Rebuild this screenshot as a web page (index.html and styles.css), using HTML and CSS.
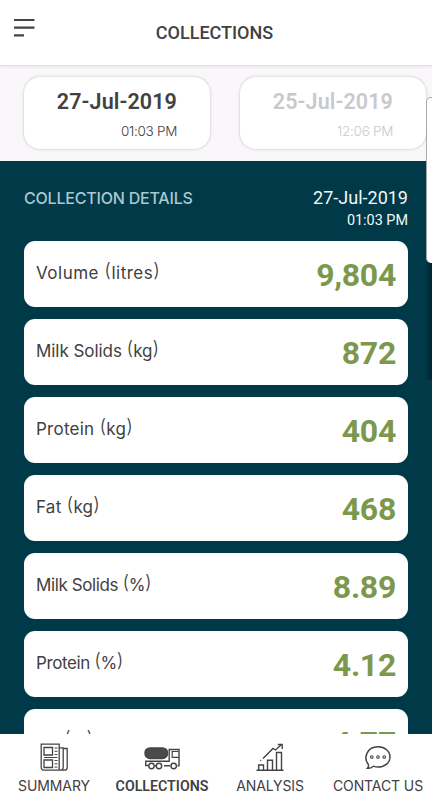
FILE: index.html
```html
<!DOCTYPE html>
<html lang="en">
<head>
<meta charset="utf-8">
<title>Collections</title>
<link rel="stylesheet" href="styles.css">
</head>
<body>
<div class="app">
  <header class="topbar">
    <svg class="menu" viewBox="0 0 22 20"><path d="M0 2h20.500M0 9.700h20.500M0 17.300h10" stroke="#444" stroke-width="2.200"/></svg>
    <h1 class="title">COLLECTIONS</h1>
  </header>
  <div class="dates">
    <div class="date-card"><div class="day">27-Jul-2019</div><div class="time">01:03 PM</div></div>
    <div class="date-card inactive"><div class="day">25-Jul-2019</div><div class="time">12:06 PM</div></div>
  </div>
  <main class="details">
    <div class="details-head">
      <h2 class="heading">COLLECTION DETAILS</h2>
      <div class="stamp"><div class="stamp-day">27-Jul-2019</div><div class="stamp-time">01:03 PM</div></div>
    </div>
    <div class="rows">
      <div class="row"><span class="label wide">Volume <span class="paren">(</span>litres<span class="paren">)</span></span><span class="value">9,804</span></div>
      <div class="row"><span class="label snug">Milk Solids <span class="paren">(</span>kg<span class="paren">)</span></span><span class="value">872</span></div>
      <div class="row"><span class="label medium">Protein <span class="paren">(</span>kg<span class="paren">)</span></span><span class="value">404</span></div>
      <div class="row"><span class="label medium">Fat <span class="paren">(</span>kg<span class="paren">)</span></span><span class="value">468</span></div>
      <div class="row"><span class="label tight">Milk Solids <span class="paren">(</span>%<span class="paren">)</span></span><span class="value">8.89</span></div>
      <div class="row"><span class="label tight">Protein <span class="paren">(</span>%<span class="paren">)</span></span><span class="value">4.12</span></div>
      <div class="row"><span class="label tight">Fat <span class="paren">(</span>%<span class="paren">)</span></span><span class="value">4.77</span></div>
    </div>
  </main>
  <nav class="tabs">
    <div class="tab summary">
      <svg class="icon" viewBox="0 0 36 32" fill="none" stroke="#444" stroke-width="1.300"><path d="M5.200 3.200h18v26H8.500q-3.300 0-3.300-3.300zM23.200 6.800h4v19.500q0 2.900-2.800 2.900M27.200 7.500h4v19q0 2.700-2.700 2.700h-5"/><path d="M8 6.500h8.500v7.500H8zM8 19h8.500v7.500H8z"/><path d="M18.500 7h3M18.500 10.300h3M18.500 13.600h3M18.500 19.500h3M18.500 22.800h3M18.500 26.100h3M8 16.500h13.500" stroke-width="1"/></svg>
      <span class="tab-name">SUMMARY</span>
    </div>
    <div class="tab collections">
      <svg class="icon" viewBox="0 0 36 32" fill="none" stroke="#444" stroke-width="1.400"><rect x="1" y="6.900" width="22.500" height="10.600" rx="5" fill="#4a4a4a"/><path d="M5 24.500H1.700v-4.300h23.500V8.500H35v16.300h-1.500M10.500 24.800h1.500M20 24.800h6.500"/><path d="M34.500 10.500h-6.300v5.800H35" stroke-width="1.200"/><g fill="#fff"><circle cx="7.500" cy="25" r="2.700"/><circle cx="15" cy="25" r="2.700"/><circle cx="29.700" cy="25" r="2.700"/></g></svg>
      <span class="tab-name">COLLECTIONS</span>
    </div>
    <div class="tab analysis">
      <svg class="icon" viewBox="0 0 36 32" fill="none" stroke="#444" stroke-width="1.400"><path d="M4.500 29.300h27M6.700 29v-5h4.800v5M15.500 29V19.200h5V29M24.500 29V11.500h5V29"/><path d="M11 17.500 21 7.500l2.500 1.500 6-5.500M25.800 3.500h4.400v4.400M8.300 19.700l.8-.6"/></svg>
      <span class="tab-name">ANALYSIS</span>
    </div>
    <div class="tab contact">
      <svg class="icon" viewBox="0 0 36 32" fill="none" stroke="#444" stroke-width="1.500"><path d="M8.200 23.200C3.500 17.500 6.300 5.800 18 5.800c7 0 12 4.500 12 10.200s-5 10.100-12 10.100c-2 0-3.200-.4-4.600-.8-1.700 1.500-3.700 2.200-6 2 1.200-1.300 1.500-2.600.8-4.100z"/><g stroke-width="1.100"><circle cx="11.800" cy="16" r="1.300"/><circle cx="18" cy="16" r="1.300"/><circle cx="24.200" cy="16" r="1.300"/></g></svg>
      <span class="tab-name">CONTACT US</span>
    </div>
  </nav>
  <div class="edge-shadow"></div>
  <div class="edge-panel"></div>
</div>
</body>
</html>
```
FILE: styles.css
```css
* { box-sizing: border-box; }
body { margin: 0; font-family: Roboto, sans-serif; color: #414042; }
h1, h2 { margin: 0; }
.app { position: relative; width: 432px; height: 800px; overflow: hidden; display: flex; flex-direction: column; background: #f9f7f9; }
.topbar { height: 66px; flex: none; background: #fff; border-bottom: 1px solid #e2e2e2; box-shadow: 0 1px 3px rgba(0,0,0,.08); display: grid; grid-template-columns: 60px 1fr 63px; }
.menu { width: 22px; height: 20px; margin: 18px 0 0 14px; }
.title { font-size: 18px; font-weight: 500; line-height: 22px; margin-top: 22px; text-align: center; }
.dates { height: 95px; flex: none; padding: 11px 0 0 24px; display: flex; gap: 30px; }
.date-card { width: 186px; height: 72px; flex: none; border-radius: 16px; background: #fff; box-shadow: 0 0 3px rgba(0,0,0,.24); padding: 12px 33px 0 0; text-align: right; }
.day { font-size: 21.5px; font-weight: 600; line-height: 26px; letter-spacing: .1px; }
.time { font-family: Inter, sans-serif; font-size: 13.5px; font-weight: 300; line-height: 18px; margin-top: 7px; letter-spacing: -.3px; }
.inactive { color: #c9c9cb; }
.details { flex: 1; min-height: 0; overflow: hidden; background: #003a49; padding: 0 24px; }
.details-head { display: flex; justify-content: space-between; height: 80px; padding-top: 26px; }
.heading { font-family: Inter, sans-serif; font-size: 16px; font-weight: 500; line-height: 22px; color: #abc7d0; letter-spacing: -.2px; }
.stamp { color: #f2f8fa; text-align: right; }
.stamp-day { font-size: 18px; line-height: 22px; }
.stamp-time { font-size: 14.4px; line-height: 20px; margin-top: 2px; }
.rows { display: flex; flex-direction: column; gap: 12px; }
.row { height: 66px; flex: none; background: #fff; border-radius: 11px; padding: 0 12px; display: flex; justify-content: space-between; }
.label { font-family: Inter, sans-serif; font-size: 17px; line-height: 22px; padding-top: 21px; }
.paren { font-size: 19px; font-weight: 300; line-height: 0; vertical-align: 2px; }
.wide { letter-spacing: .5px; }
.snug { letter-spacing: -.05px; }
.medium { letter-spacing: .25px; }
.tight { letter-spacing: -.4px; }
.value { font-size: 32px; font-weight: 700; line-height: 38px; padding-top: 15px; color: #7b984d; letter-spacing: -.3px; }
.tabs { height: 66px; flex: none; background: #fff; display: grid; grid-template-columns: 108px 108px 108px 108px; }
.tab { display: flex; flex-direction: column; align-items: center; padding-top: 7px; }
.icon { width: 36px; height: 32px; }
.tab-name { font-family: Inter, sans-serif; font-size: 14px; line-height: 20px; margin-top: 3px; white-space: nowrap; letter-spacing: -.1px; }
.collections .tab-name { font-family: Roboto, sans-serif; font-size: 14.2px; font-weight: 600; letter-spacing: 0; }
.edge-shadow { position: absolute; left: 426px; top: 260px; width: 6px; height: 120px; background: linear-gradient(90deg, #003543, #002632); }
.edge-panel { position: absolute; left: 426px; top: 97px; width: 12px; height: 166px; border-radius: 5px; background: #fff; border: 1px solid #aaa; border-bottom: 0; }
```
